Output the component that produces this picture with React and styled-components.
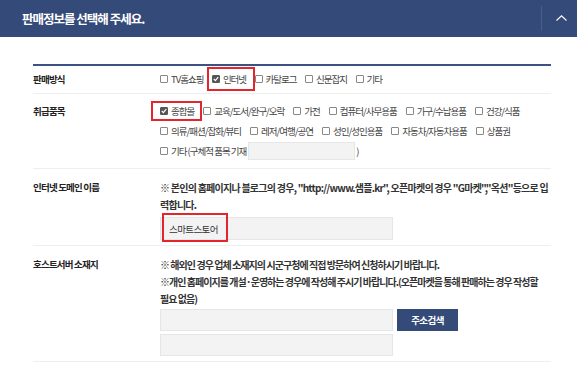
import React from 'react'
import styled, { createGlobalStyle, css } from 'styled-components'

const NAVY = '#344a78'

const GlobalStyle = createGlobalStyle`
  body {
    margin: 0;
    background: #fff;
    font-family: 'Noto Sans CJK KR', 'Noto Sans', sans-serif;
  }
  * { box-sizing: border-box; }
`

const saleTypes = [
  { name: 'TV홈쇼핑' },
  { name: '인터넷', checked: true, mark: '-2px -9px -2px -5px' },
  { name: '카탈로그' },
  { name: '신문잡지' },
  { name: '기타' },
]

const categories = [
  { name: '종합몰', checked: true, mark: '0 -8px 0 -9px' },
  { name: '교육/도서/완구/오락' },
  { name: '가전' },
  { name: '컴퓨터/사무용품' },
  { name: '가구/수납용품' },
  { name: '건강/식품' },
  { name: '의류/패션/잡화/뷰티' },
  { name: '레저/여행/공연' },
  { name: '성인/성인용품' },
  { name: '자동차/자동차용품' },
  { name: '상품권' },
]

const Check = ({ checked }) => (
  <Box $checked={checked}>
    {checked && (
      <svg width='6' height='6' viewBox='0 0 6 6'>
        <polyline points='0.8,3 2.4,4.6 5.2,1.2' fill='none' stroke='#fff' strokeWidth='1.2' />
      </svg>
    )}
  </Box>
)

const App = () => {
  return (
    <>
      <GlobalStyle />
      <Header>
        <Title>판매정보를 선택해 주세요.</Title>
        <Toggle type='button' aria-label='접기'>
          <svg width='11' height='6' viewBox='0 0 11 6'>
            <polyline points='0.5,5.5 5.5,0.8 10.5,5.5' fill='none' stroke='#fff' strokeWidth='1.1' />
          </svg>
        </Toggle>
      </Header>

      <Section>
        <Table>
          {/* 판매방식 */}
          <Row $pad='3px 0 4px'>
            <Label $lh='20px'>판매방식</Label>
            <Options $gap='8.5px'>
              {saleTypes.map((item) => (
                <Option key={item.name} $mark={item.mark}>
                  <Check checked={item.checked} />
                  {item.name}
                </Option>
              ))}
            </Options>
          </Row>

          {/* 취급품목 */}
          <Row $pad='7px 0'>
            <Label $lh='20px'>취급품목</Label>
            <Options $gap='9px'>
              {categories.map((item) => (
                <Option key={item.name} $mark={item.mark}>
                  <Check checked={item.checked} />
                  {item.name}
                </Option>
              ))}
              <Option>
                <Check />
                기타 (구체적 품목 기재
                <SmallInput type='text' readOnly value='' />)
              </Option>
            </Options>
          </Row>

          {/* 인터넷 도메인 */}
          <Row $pad='10px 0 5px'>
            <Label $lh='17px'>인터넷 도메인 이름</Label>
            <div>
              <Note $ls='-0.75px'>
                ※ 본인의 홈페이지나 블로그의 경우, "http://www.샘플.kr", 오픈마켓의 경우 "G마켓","옥션"등으로 입력합니다.
              </Note>
              <InputWrap $mt='4px'>
                <Input type='text' readOnly value='스마트스토어' $h='23px' />
                <Marker />
              </InputWrap>
            </div>
          </Row>

          {/* 호스트서버 */}
          <Row $pad='10px 0 5px'>
            <Label $lh='17px'>호스트서버 소재지</Label>
            <div>
              <Note $ls='-0.95px' $keep>
                ※ 해외인 경우 업체 소재지의 시군구청에 직접 방문하여 신청하시기 바랍니다.
              </Note>
              <Note $ls='-0.97px' $keep>
                ※개인 홈페이지를 개설·운영하는 경우에 작성해 주시기 바랍니다.(오픈마켓을 통해 판매하는 경우 작성할 필요 없음)
              </Note>
              <InputWrap $mt='2px'>
                <Input type='text' readOnly value='' $h='22px' />
                <SearchButton type='button'>주소검색</SearchButton>
              </InputWrap>
              <InputWrap $mt='3px'>
                <Input type='text' readOnly value='' $h='22px' />
              </InputWrap>
            </div>
          </Row>
        </Table>
      </Section>
    </>
  )
}

const Header = styled.header`
  display: flex;
  align-items: center;
  height: 37px;
  margin-right: 3px;
  padding-left: 22px;
  background: ${NAVY};
`

const Title = styled.h2`
  flex: 1;
  margin: 0;
  color: #fff;
  font-size: 12.5px;
  font-weight: 700;
  letter-spacing: -1px;
`

const Toggle = styled.button`
  display: flex;
  align-items: center;
  justify-content: center;
  width: 36px;
  height: 25px;
  padding: 0 0 1px 3px;
  border: 0;
  border-left: 1px solid #4a5e88;
  background: transparent;
  cursor: pointer;
`

const Section = styled.section`
  padding: 27px 29px 0 33px;
`

const Table = styled.div`
  border-top: 2px solid #3c5283;
`

const Row = styled.div`
  display: grid;
  grid-template-columns: 127px 1fr;
  padding: ${(p) => p.$pad};
  border-bottom: 1px solid #eeeeee;
`

const Label = styled.div`
  color: #222;
  font-size: 9.5px;
  font-weight: 700;
  line-height: ${(p) => p.$lh};
  letter-spacing: -0.8px;
`

const Options = styled.div`
  display: flex;
  flex-wrap: wrap;
  column-gap: ${(p) => p.$gap};
`

const Option = styled.label`
  position: relative;
  display: inline-flex;
  align-items: center;
  height: 20px;
  color: #444;
  font-size: 9.5px;
  letter-spacing: -1px;
  white-space: nowrap;

  ${(p) =>
    p.$mark &&
    css`
      &::after {
        content: '';
        position: absolute;
        inset: ${p.$mark};
        border: 2px solid #e3262d;
        pointer-events: none;
      }
    `}
`

const Box = styled.span`
  display: inline-flex;
  align-items: center;
  justify-content: center;
  width: 8px;
  height: 8px;
  margin-right: 3px;
  border: 1px solid ${(p) => (p.$checked ? '#555' : '#888')};
  border-radius: 1px;
  background: ${(p) => (p.$checked ? '#555' : '#fff')};
`

const SmallInput = styled.input`
  width: 107px;
  height: 18px;
  margin: 0 1px 0 2px;
  border: 1px solid #e6e6e6;
  background: #f3f3f3;
`

const Note = styled.p`
  margin: 0;
  color: #333;
  font-size: 10px;
  font-weight: 700;
  line-height: 17px;
  letter-spacing: ${(p) => p.$ls};
  word-break: ${(p) => (p.$keep ? 'keep-all' : 'normal')};
`

const InputWrap = styled.div`
  position: relative;
  display: flex;
  gap: 4px;
  margin-top: ${(p) => p.$mt};
`

const Input = styled.input`
  width: 233px;
  height: ${(p) => p.$h};
  padding: 0 8px;
  border: 1px solid #e6e6e6;
  background: #f3f3f3;
  color: #333;
  font-family: inherit;
  font-size: 9.5px;
  letter-spacing: -0.6px;
  outline: none;
`

const Marker = styled.span`
  position: absolute;
  left: 2px;
  top: -4px;
  width: 66px;
  height: 29px;
  border: 2px solid #e3262d;
  pointer-events: none;
`

const SearchButton = styled.button`
  width: 61px;
  height: 22px;
  border: 0;
  background: ${NAVY};
  color: #fff;
  font-family: inherit;
  font-size: 9.5px;
  font-weight: 700;
  letter-spacing: -0.6px;
  cursor: pointer;
`

export default App
